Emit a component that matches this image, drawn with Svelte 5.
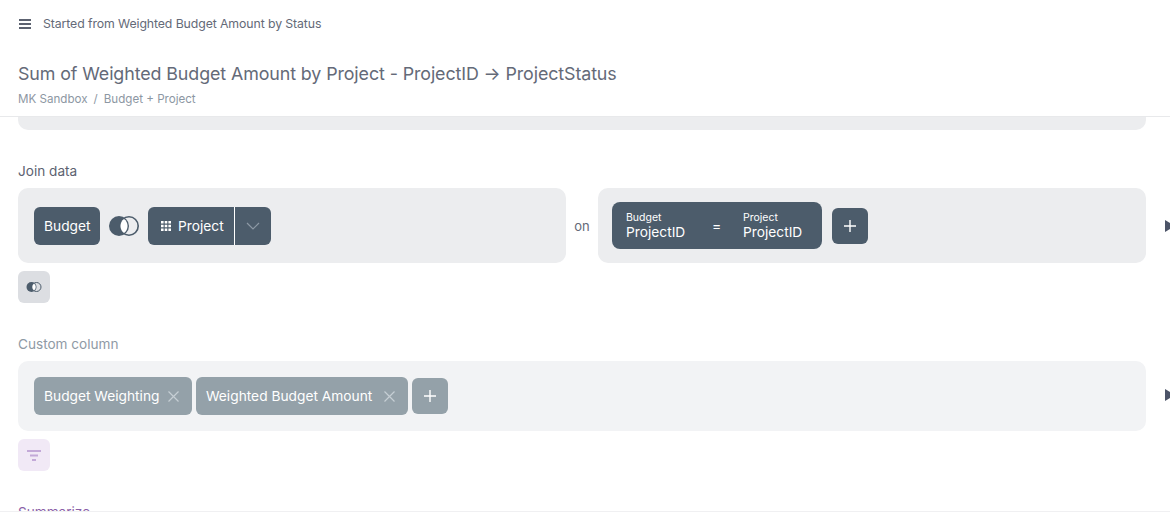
<script>
    let joinChips = ["Budget Weighting", "Weighted Budget Amount"];
</script>

<div class="page">
    <header>
        <div class="top">
            <svg class="menu" width="12" height="10" viewBox="0 0 12 10">
                <path d="M0 0h12v2H0zM0 4h12v2H0zM0 8h12v2H0z" fill="#5c6270" />
            </svg>
            <span>Started from Weighted Budget Amount by Status</span>
        </div>
        <h1>Sum of Weighted Budget Amount by Project - ProjectID → ProjectStatus</h1>
        <div class="crumbs">MK Sandbox<span class="slash">/</span>Budget + Project</div>
    </header>

    <main>
        <div class="stub"></div>

        <section class="join-section">
            <div class="label">Join data</div>
            <div class="row">
                <div class="panel join">
                    <div class="chip dark budget">Budget</div>
                    <svg class="venn" width="32" height="20" viewBox="0 0 32 20">
                        <circle cx="11" cy="10" r="10" fill="#4c5c6b" />
                        <circle cx="21" cy="10" r="9.2" fill="none" stroke="#4c5c6b" stroke-width="1.6" />
                        <path d="M16 3.1A8.5 8.5 0 0 1 16 16.9A8.5 8.5 0 0 1 16 3.1z" fill="#fff" />
                    </svg>
                    <div class="chip dark split">
                        <div class="split-main">
                            <svg width="10" height="10" viewBox="0 0 10 10" fill="#fff">
                                <path d="M0 0h2.6v2.6H0zM3.7 0h2.6v2.6H3.7zM7.4 0H10v2.6H7.4zM0 3.7h2.6v2.6H0zM3.7 3.7h2.6v2.6H3.7zM7.4 3.7H10v2.6H7.4zM0 7.4h2.6V10H0zM3.7 7.4h2.6V10H3.7zM7.4 7.4H10V10H7.4z" />
                            </svg>
                            Project
                        </div>
                        <div class="split-caret">
                            <svg width="14" height="8" viewBox="0 0 14 8" fill="none">
                                <path d="M1 1l6 6 6-6" stroke="#8d99a5" stroke-width="1.2" />
                            </svg>
                        </div>
                    </div>
                </div>
                <div class="on">on</div>
                <div class="panel condition">
                    <div class="cond">
                        <div class="side">
                            <small>Budget</small>
                            <span>ProjectID</span>
                        </div>
                        <div class="eq">=</div>
                        <div class="side">
                            <small>Project</small>
                            <span>ProjectID</span>
                        </div>
                    </div>
                    <div class="plus dark">
                        <svg width="12" height="12" viewBox="0 0 12 12">
                            <path d="M6 0v12M0 6h12" stroke="#fff" stroke-width="1.4" />
                        </svg>
                    </div>
                </div>
            </div>
            <div class="tool grey">
                <svg width="16" height="10" viewBox="0 0 32 20">
                    <circle cx="11" cy="10" r="10" fill="#4c5c6b" />
                    <circle cx="21" cy="10" r="9" fill="none" stroke="#4c5c6b" stroke-width="2" />
                    <path d="M16 3.1A8.5 8.5 0 0 1 16 16.9A8.5 8.5 0 0 1 16 3.1z" fill="#fff" />
                </svg>
            </div>
            <div class="arrow"></div>
        </section>

        <section class="custom-section">
            <div class="label muted">Custom column</div>
            <div class="panel custom">
                {#each joinChips as chip}
                    <div class="chip light">
                        {chip}
                        <svg width="11" height="11" viewBox="0 0 11 11">
                            <path d="M.5.5l10 10M10.5.5l-10 10" stroke="#c6ced4" stroke-width="1.2" />
                        </svg>
                    </div>
                {/each}
                <div class="plus light">
                    <svg width="12" height="12" viewBox="0 0 12 12">
                        <path d="M6 0v12M0 6h12" stroke="#fff" stroke-width="1.4" />
                    </svg>
                </div>
            </div>
            <div class="tool lilac">
                <svg width="14" height="11" viewBox="0 0 14 11" fill="#c3a9d8">
                    <path d="M0 0h14v2H0zM3 4.5h8v2H3zM5 9h4v2H5z" />
                </svg>
            </div>
            <div class="arrow"></div>
        </section>

        <div class="label summarize">Summarize</div>
    </main>
</div>

<style>
    :global(body) {
        background: #fff;
    }

    .page {
        width: 1170px;
        height: 512px;
        overflow: hidden;
        font-family: "Inter", "Liberation Sans", sans-serif;
        color: #646a78;
        border-bottom: 1px solid #f0f0f2;
        box-sizing: border-box;
    }

    header {
        height: 117px;
        padding: 0 18px;
        box-sizing: border-box;
        border-bottom: 1px solid #e8e9eb;
        overflow: hidden;
    }

    .top {
        display: flex;
        align-items: center;
        gap: 12px;
        height: 20px;
        margin-top: 14px;
        font-size: 12.3px;
        letter-spacing: -0.1px;
    }

    .top span {
        padding-bottom: 2px;
    }

    .menu {
        margin-left: 1px;
    }

    h1 {
        margin: 28px 0 0;
        font-size: 17.85px;
        line-height: 24px;
        font-weight: 400;
        letter-spacing: -0.1px;
        white-space: nowrap;
    }

    .crumbs {
        margin-top: 5px;
        font-size: 11.6px;
        line-height: 16px;
        color: #8d97a3;
    }

    .slash {
        margin: 0 6px;
    }

    main {
        padding: 0 24px 0 18px;
    }

    .stub {
        height: 13px;
        background: #ecedef;
        border-radius: 0 0 10px 10px;
    }

    section {
        position: relative;
    }

    .label {
        font-size: 13.6px;
        line-height: 18px;
        color: #5c6270;
    }

    .label.muted {
        color: #8f9aa5;
    }

    .join-section {
        margin-top: 32px;
    }

    .custom-section {
        margin-top: 32px;
    }

    .row {
        display: flex;
        align-items: stretch;
        margin-top: 8px;
    }

    .panel {
        display: flex;
        align-items: center;
        border-radius: 10px;
        background: #ecedef;
        padding: 0 16px;
        box-sizing: border-box;
    }

    .join,
    .condition {
        width: 548px;
        height: 75px;
    }

    .join {
        gap: 8px;
    }

    .condition {
        gap: 10px;
        padding-left: 14px;
    }

    .on {
        width: 32px;
        align-self: center;
        text-align: center;
        font-size: 13px;
    }

    .chip {
        display: flex;
        align-items: center;
        height: 38px;
        border-radius: 6px;
        color: #fff;
        font-size: 13.75px;
        box-sizing: border-box;
        white-space: nowrap;
    }

    .dark {
        background: #4c5c6b;
    }

    .chip.dark {
        padding: 0 10px;
    }

    .chip.budget {
        width: 66px;
    }

    .chip.split {
        padding: 0;
        width: 123px;
    }

    .split-main {
        display: flex;
        align-items: center;
        gap: 7px;
        width: 87px;
        height: 100%;
        padding-left: 13px;
        box-sizing: border-box;
        border-right: 1px solid #fff;
    }

    .split-caret {
        flex: 1;
        display: flex;
        align-items: center;
        justify-content: center;
    }

    .cond {
        display: flex;
        align-items: center;
        width: 210px;
        height: 47px;
        padding-left: 14px;
        box-sizing: border-box;
        border-radius: 8px;
        background: #4c5c6b;
        color: #fff;
    }

    .side {
        display: flex;
        flex-direction: column;
        width: 72px;
    }

    .side small {
        font-size: 10.5px;
        line-height: 13px;
    }

    .side span {
        font-size: 13.75px;
        line-height: 17px;
    }

    .eq {
        width: 45px;
        box-sizing: border-box;
        padding-left: 14px;
        font-size: 14px;
    }

    .plus {
        display: flex;
        align-items: center;
        justify-content: center;
        width: 36px;
        height: 36px;
        border-radius: 6px;
    }

    .plus.light {
        background: #94a1a9;
    }

    .tool {
        display: flex;
        align-items: center;
        justify-content: center;
        width: 32px;
        height: 32px;
        margin-top: 8px;
        border-radius: 6px;
    }

    .tool.grey {
        background: #dcdee2;
    }

    .tool.lilac {
        background: #f1e9f6;
    }

    .custom {
        height: 70px;
        margin-top: 8px;
        gap: 4px;
        background: #f2f3f5;
    }

    .chip.light {
        justify-content: space-between;
        width: 212px;
        padding: 0 13px 0 10px;
        background: #94a1a9;
    }

    .chip.light:first-child {
        width: 158px;
    }

    .arrow {
        position: absolute;
        right: -29px;
        width: 0;
        height: 0;
        border-left: 10px solid #4c5468;
        border-top: 6px solid transparent;
        border-bottom: 6px solid transparent;
    }

    .join-section .arrow {
        top: 58px;
    }

    .custom-section .arrow {
        top: 54px;
    }

    .summarize {
        margin-top: 32px;
        color: #8a5fa8;
    }
</style>
